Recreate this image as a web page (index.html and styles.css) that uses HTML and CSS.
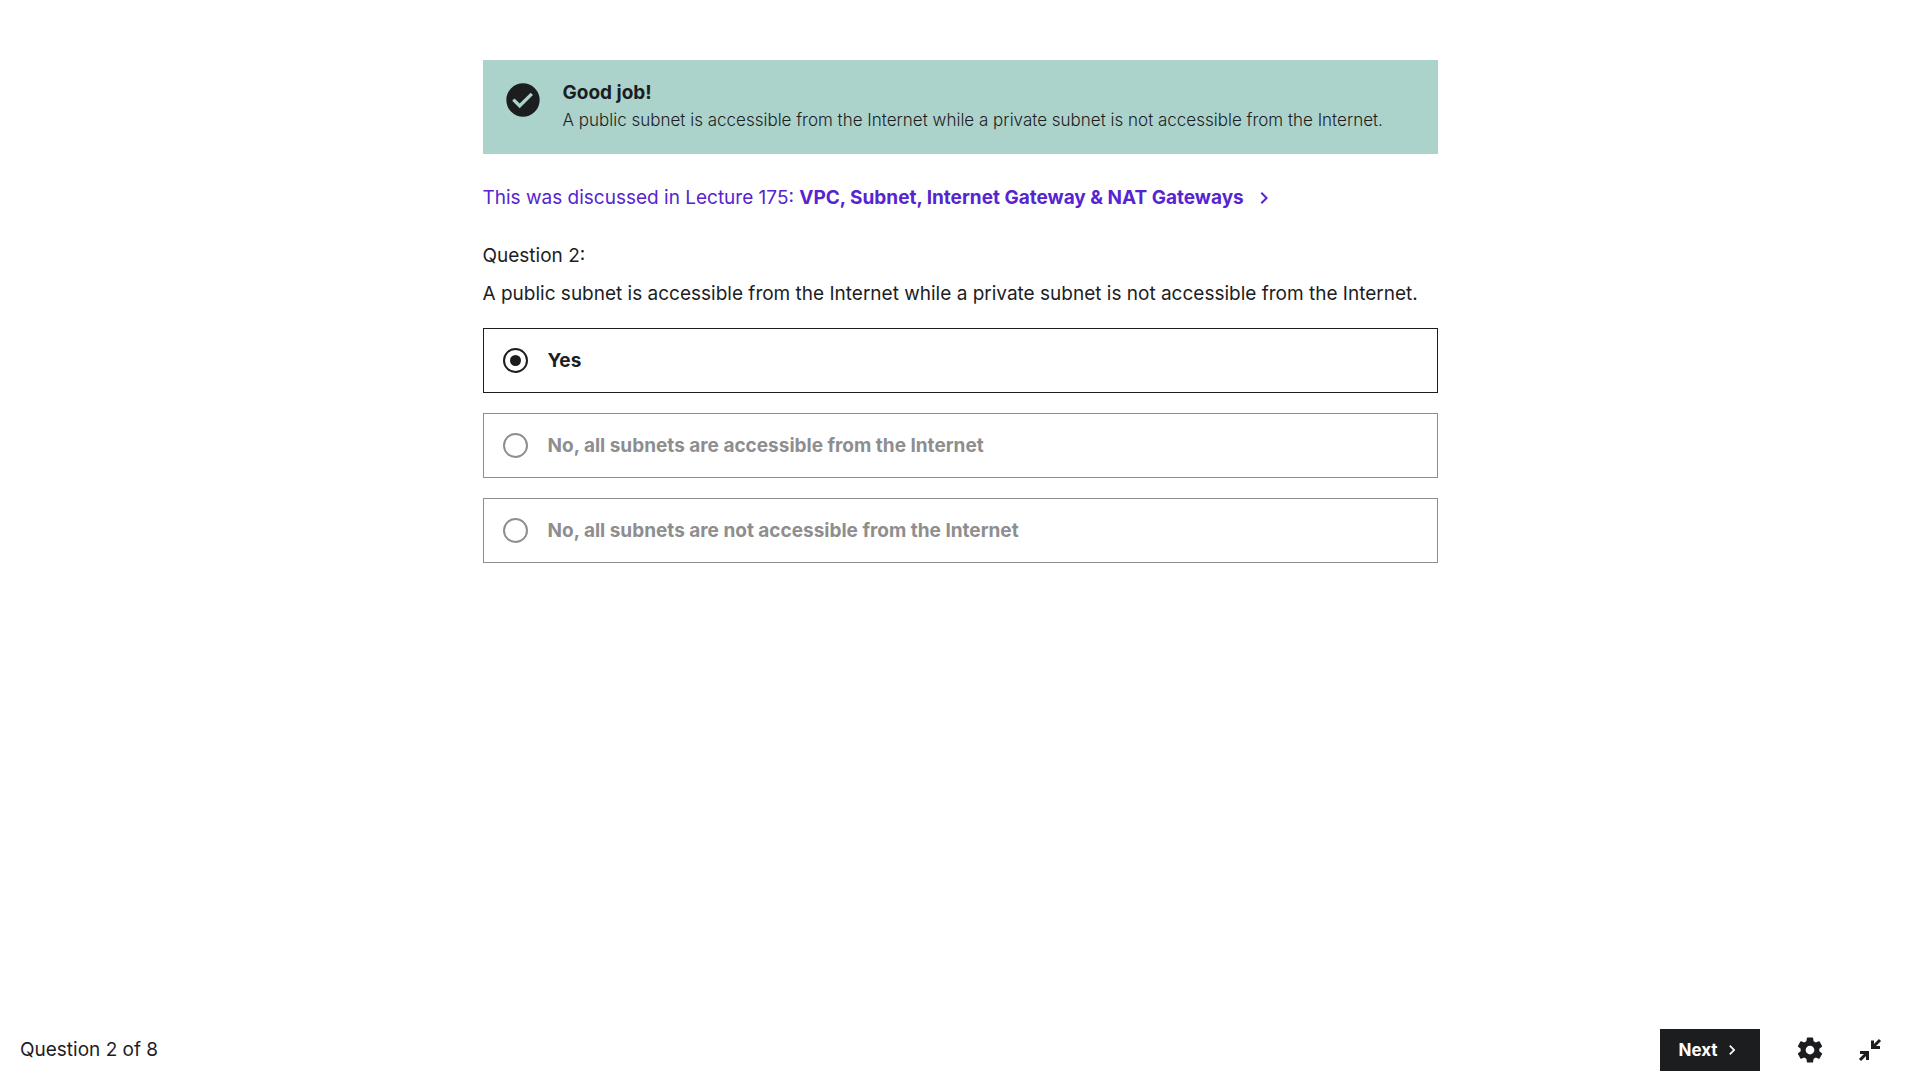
FILE: index.html
```html
<!DOCTYPE html>
<html lang="en">
<head>
  <meta charset="utf-8">
  <meta name="viewport" content="width=device-width, initial-scale=1">
  <title>Quiz – Question 2 of 8</title>
  <link rel="stylesheet" href="styles.css">
</head>
<body>
  <main class="quiz">
    <section class="alert" role="status">
      <svg class="alert-icon" viewBox="0 0 24 24" aria-hidden="true">
        <path fill-rule="evenodd" d="M12 2a10 10 0 1 0 0 20 10 10 0 0 0 0-20zm-2 15l-4.500-4.500 1.410-1.410L10 14.170l6.590-6.590L18 9l-8 8z"/>
      </svg>
      <div class="alert-body">
        <h1 class="alert-title">Good job!</h1>
        <p class="alert-text">A public subnet is accessible from the Internet while a private subnet is not accessible from the Internet.</p>
      </div>
    </section>

    <a class="lecture-link" href="#lecture-175">
      <span>This was discussed in Lecture 175: <strong>VPC, Subnet, Internet Gateway &amp; NAT Gateways</strong></span>
      <svg class="chevron chevron-large" viewBox="0 0 24 24" aria-hidden="true">
        <path d="M10 6L8.590 7.410 13.170 12l-4.580 4.590L10 18l6-6z"/>
      </svg>
    </a>

    <form class="question">
      <p class="question-number">Question 2:</p>
      <p class="question-text" id="question-text">A public subnet is accessible from the Internet while a private subnet is not accessible from the Internet.</p>
      <div class="answers" role="radiogroup" aria-labelledby="question-text">
        <label class="answer">
          <input class="answer-radio" type="radio" name="answer" checked>
          <span>Yes</span>
        </label>
        <label class="answer answer-disabled">
          <input class="answer-radio" type="radio" name="answer" disabled>
          <span>No, all subnets are accessible from the Internet</span>
        </label>
        <label class="answer answer-disabled">
          <input class="answer-radio" type="radio" name="answer" disabled>
          <span>No, all subnets are not accessible from the Internet</span>
        </label>
      </div>
    </form>
  </main>

  <footer class="footer">
    <span class="progress">Question 2 of 8</span>
    <button class="next-button" type="button">
      Next
      <svg class="chevron" viewBox="0 0 24 24" aria-hidden="true">
        <path d="M10 6L8.590 7.410 13.170 12l-4.580 4.590L10 18l6-6z"/>
      </svg>
    </button>
    <div class="tools">
      <button class="icon-button" type="button" aria-label="Settings">
        <svg class="tool-icon" viewBox="0 0 24 24" aria-hidden="true">
          <path d="M19.430 12.980c.04-.32.07-.64.07-.98s-.03-.66-.07-.98l2.110-1.650c.19-.15.24-.42.12-.64l-2-3.460c-.12-.22-.39-.3-.61-.22l-2.490 1c-.52-.4-1.080-.73-1.690-.98l-.38-2.650C14.460 2.180 14.250 2 14 2h-4c-.25 0-.46.18-.49.42l-.38 2.650c-.61.25-1.170.59-1.690.98l-2.490-1c-.23-.09-.49 0-.61.22l-2 3.460c-.13.22-.07.49.12.64l2.110 1.650c-.04.32-.07.65-.07.98s.03.66.07.98l-2.110 1.650c-.19.15-.24.42-.12.64l2 3.460c.12.22.39.3.61.22l2.490-1c.52.4 1.080.73 1.690.98l.38 2.650c.03.24.24.42.49.42h4c.25 0 .46-.18.49-.42l.38-2.650c.61-.25 1.170-.59 1.690-.98l2.490 1c.23.09.49 0 .61-.22l2-3.460c.12-.22.07-.49-.12-.64l-2.110-1.650zM12 15.500c-1.930 0-3.500-1.570-3.500-3.500s1.570-3.500 3.500-3.500 3.500 1.570 3.500 3.500-1.570 3.500-3.500 3.500z"/>
        </svg>
      </button>
      <button class="icon-button" type="button" aria-label="Exit fullscreen">
        <svg class="tool-icon tool-icon-line" viewBox="0 0 30 30" aria-hidden="true">
          <path d="M25 5l-7 7M17.500 5.500V12.500H25M5 25l7-7M5 17.500H12.500V25"/>
        </svg>
      </button>
    </div>
  </footer>
</body>
</html>
```

FILE: styles.css
```css
* {
  box-sizing: border-box;
}

body {
  display: flex;
  flex-direction: column;
  min-height: 100vh;
  margin: 0;
  background: #fff;
  color: #1c1d1f;
  font-family: Inter, "Liberation Sans", sans-serif;
  font-size: 19px;
  line-height: 28px;
}

h1,
p {
  margin: 0;
}

svg {
  display: block;
  flex: none;
  fill: currentColor;
}

.quiz {
  flex: 1;
  width: 100%;
  max-width: 955px;
  margin: 0 auto;
  padding: 60px 0;
}

.alert {
  display: flex;
  gap: 20px;
  padding: 20px;
  background: #acd2cc;
}

.alert-icon {
  width: 40px;
  height: 40px;
}

.alert-title {
  font-size: 19px;
  font-weight: 700;
  line-height: 26px;
}

.alert-text {
  font-size: 17px;
  font-weight: 300;
}

.lecture-link {
  display: flex;
  align-items: center;
  gap: 8px;
  margin: 30px 0;
  color: #5624d0;
  text-decoration: none;
}

.chevron {
  width: 20px;
  height: 20px;
}

.chevron-large {
  width: 24px;
  height: 24px;
}

.question-text {
  margin: 10px 0 20px;
}

.answers {
  display: flex;
  flex-direction: column;
  gap: 20px;
}

.answer {
  display: flex;
  align-items: center;
  gap: 20px;
  min-height: 65px;
  padding: 0 19px;
  border: 1px solid #1c1d1f;
  font-weight: 700;
}

.answer-disabled {
  border-color: #8e8e8f;
  color: #8e8e8f;
}

.answer-radio {
  display: grid;
  flex: none;
  place-items: center;
  width: 25px;
  height: 25px;
  margin: 0;
  border: 2px solid currentColor;
  border-radius: 50%;
  appearance: none;
  color: inherit;
}

.answer-radio:checked::before {
  width: 11px;
  height: 11px;
  border-radius: 50%;
  background: currentColor;
  content: "";
}

.footer {
  display: flex;
  align-items: center;
  min-height: 60px;
  padding: 0 20px;
}

.progress {
  flex: 1;
}

.next-button {
  display: flex;
  align-items: center;
  justify-content: center;
  gap: 4px;
  width: 100px;
  height: 42px;
  margin-right: 20px;
  padding: 0;
  border: 0;
  background: #1c1d1f;
  color: #fff;
  font: inherit;
  font-size: 17px;
  font-weight: 700;
}

.tools {
  display: flex;
}

.icon-button {
  display: grid;
  place-items: center;
  width: 60px;
  height: 60px;
  padding: 0;
  border: 0;
  background: none;
  color: inherit;
}

.tool-icon {
  width: 30px;
  height: 30px;
}

.tool-icon-line {
  fill: none;
  stroke: currentColor;
  stroke-width: 3;
}
```
